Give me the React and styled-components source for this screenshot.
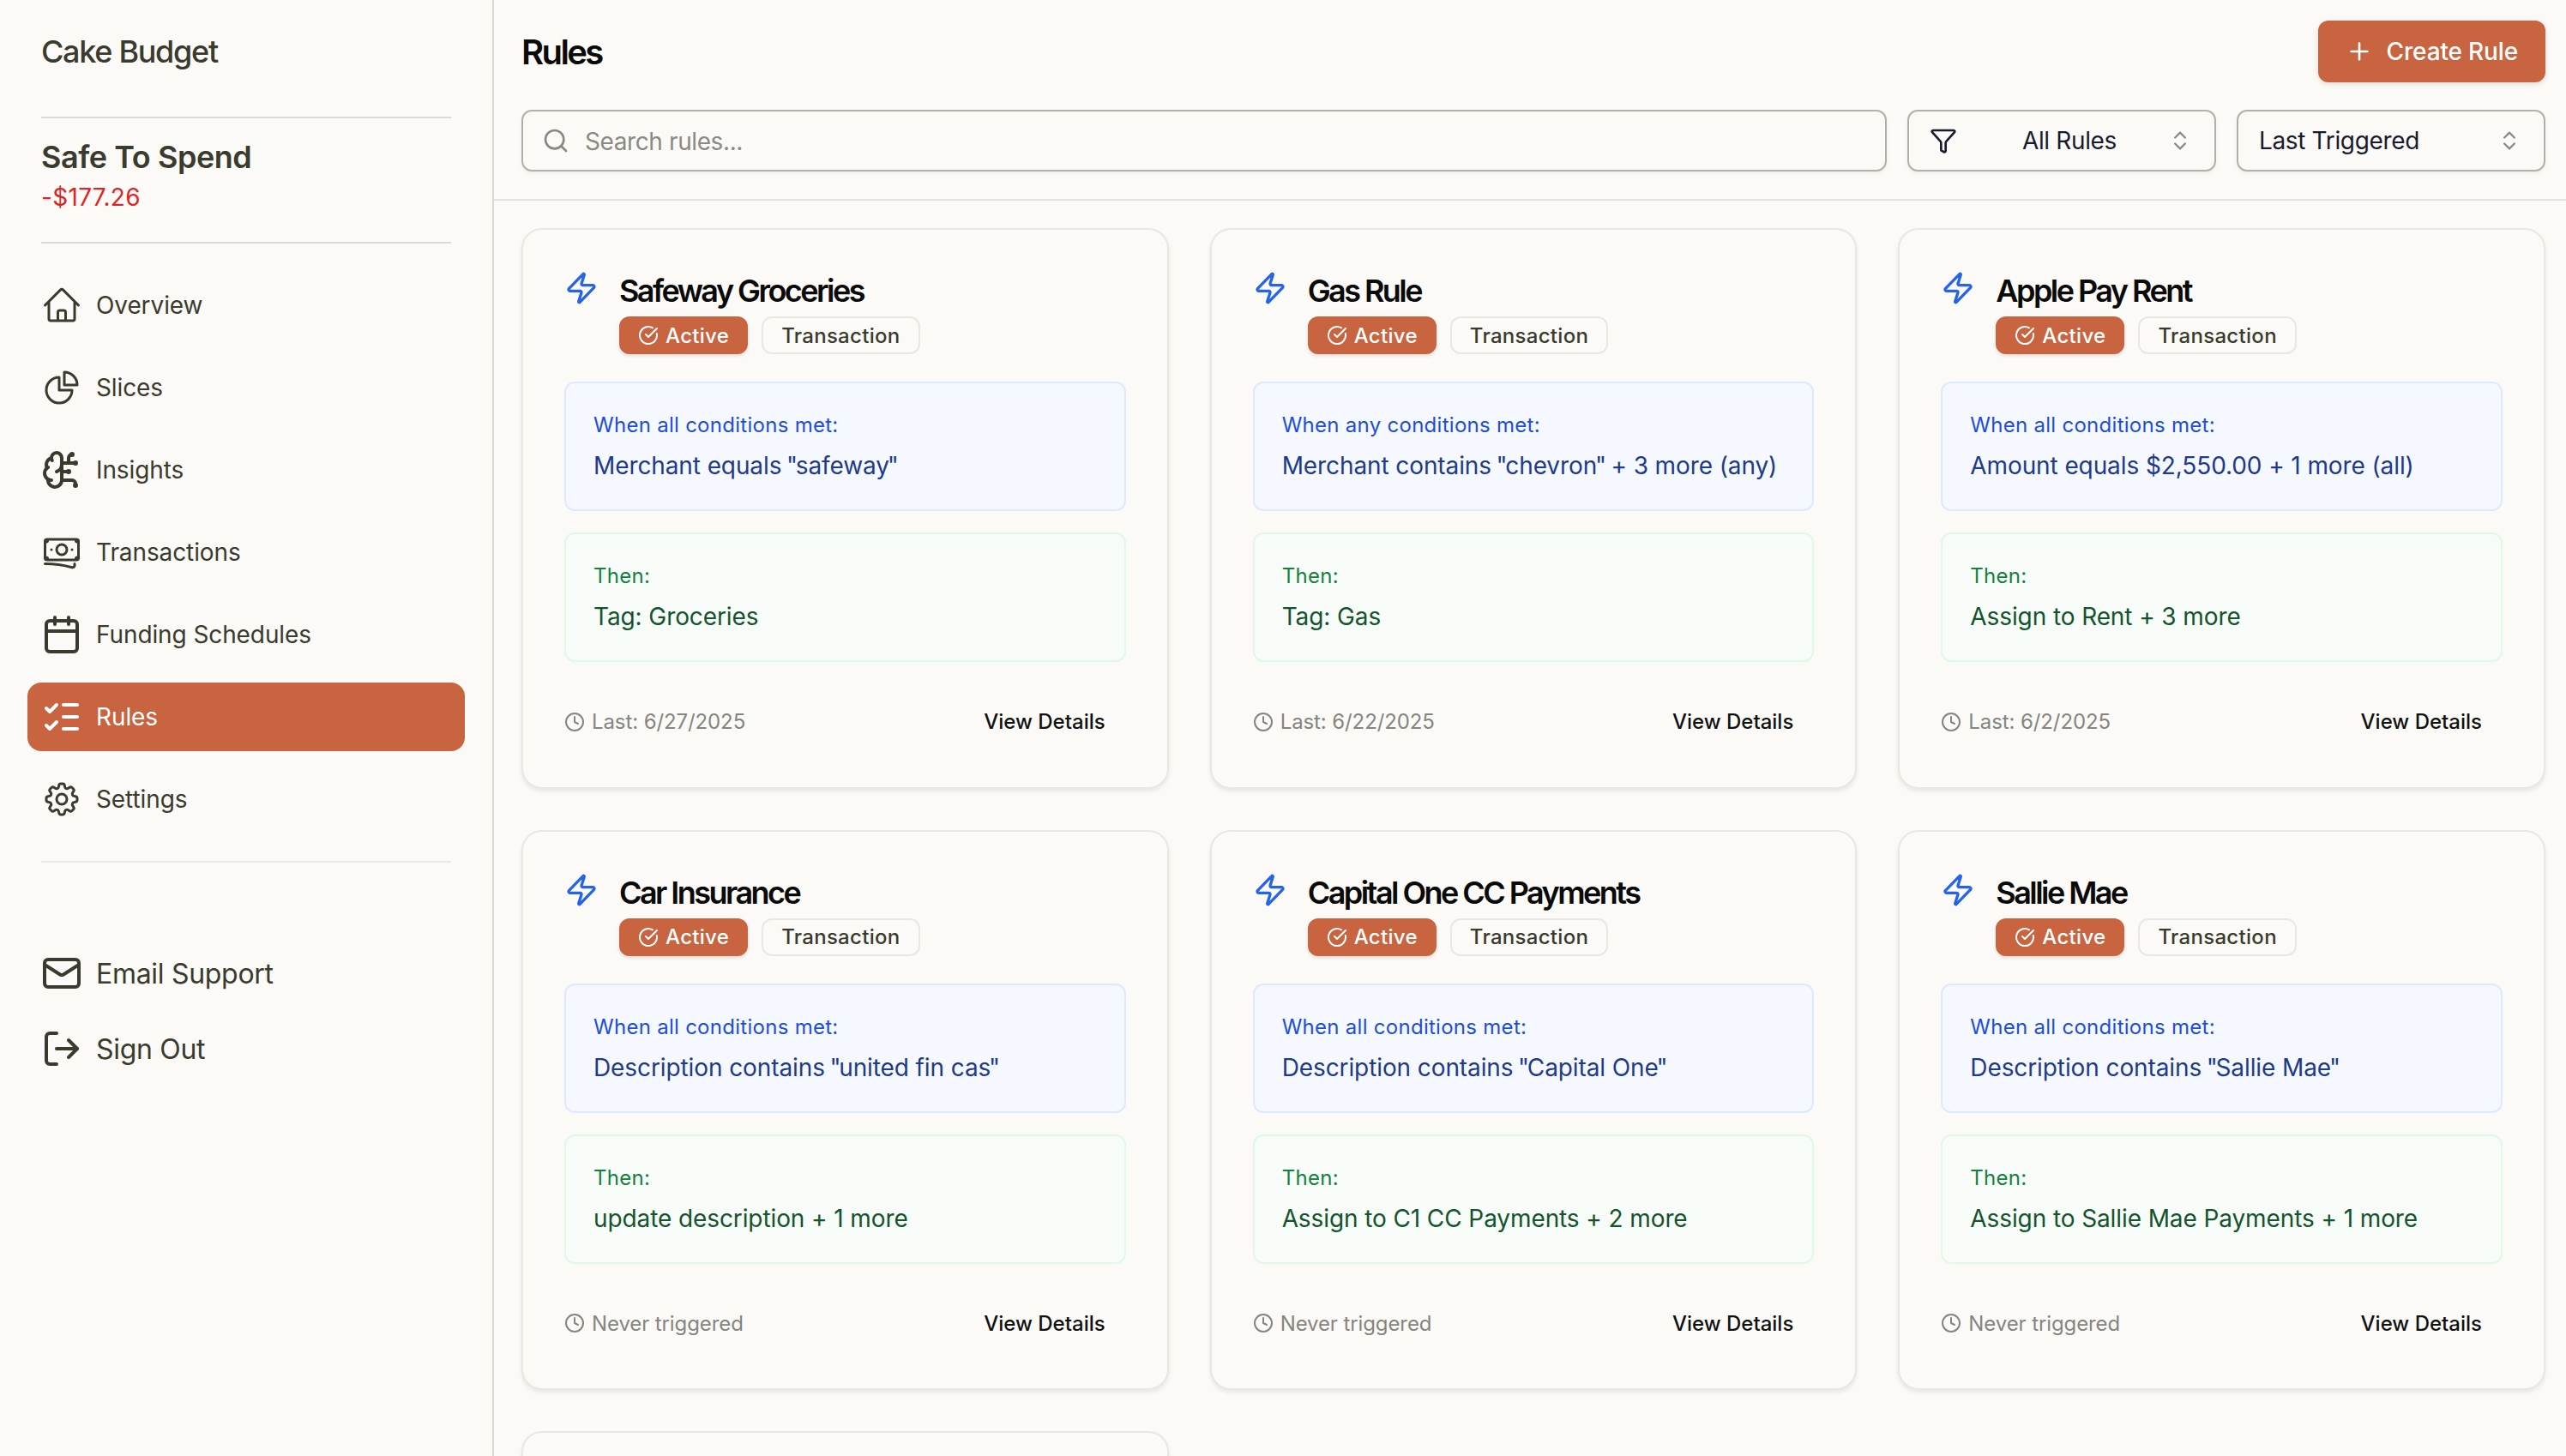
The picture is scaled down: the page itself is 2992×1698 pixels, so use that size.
import React from 'react'
import styled, { createGlobalStyle } from 'styled-components'
import {
  BrainCircuit, Calendar, ChevronsUpDown, CircleCheckBig, Clock, Filter, ListChecks,
  LogOut, Mail, Plus, Search, Zap,
} from 'lucide-react'
import { HiOutlineBanknotes, HiOutlineChartPie, HiOutlineCog8Tooth, HiOutlineHome } from 'react-icons/hi2'

const GlobalStyle = createGlobalStyle`
  * { box-sizing: border-box; }
  html, body { margin: 0; height: 100%; overflow: hidden; }
  body {
    background: #fbfaf6;
    font-family: Inter, "Noto Sans", sans-serif;
    color: #3a3a2e;
  }
`

const Page = styled.div`
  display: flex;
  height: 100vh;
  overflow: hidden;
`

const Sidebar = styled.aside`
  flex: 0 0 576px;
  padding: 0 32px;
  border-right: 2px solid #d9d8d3;
`

const Brand = styled.div`
  height: 120px;
  margin-bottom: 16px;
  padding: 0 16px;
  display: flex;
  align-items: center;
  font-size: 36px;
  font-weight: 500;
  letter-spacing: -1.3px;
`

const Divider = styled.hr`
  margin: 0 16px;
  border: none;
  height: 2px;
  background: ${(p) => (p.$light ? '#e9e8e4' : '#dbdad6')};
`

const Balance = styled.div`
  height: 144px;
  padding: 24px 16px 0;
`

const BalanceTitle = styled.div`
  font-size: 36px;
  line-height: 42px;
  font-weight: 600;
  letter-spacing: -0.45px;
`

const BalanceAmount = styled.div`
  margin-top: 8px;
  font-size: 28px;
  line-height: 36px;
  letter-spacing: 0.3px;
  color: #dc2626;
`

const Nav = styled.nav`
  display: flex;
  flex-direction: column;
  gap: 16px;
  padding: 32px 0;
`

const NavItem = styled.a`
  display: flex;
  align-items: center;
  gap: 16px;
  height: 80px;
  padding: 0 16px;
  border-radius: 16px;
  font-size: 28px;
  letter-spacing: -0.1px;
  color: ${(p) => (p.$active ? '#ffffff' : '#3a3a2e')};
  background: ${(p) => (p.$active ? '#c8643f' : 'transparent')};
  svg { flex: 0 0 48px; width: 48px; height: 48px; }
`

const FooterNav = styled.div`
  display: flex;
  flex-direction: column;
  gap: 16px;
  padding-top: 93px;
`

const FooterItem = styled(NavItem)`
  height: 72px;
  font-size: 32px;
  letter-spacing: -0.3px;
`

const Main = styled.main`
  flex: 1;
  min-width: 0;
`

const Header = styled.header`
  display: flex;
  flex-direction: column;
  gap: 32px;
  padding: 24px 24px 32px 32px;
  border-bottom: 2px solid #e3e2dc;
`

const TitleRow = styled.div`
  display: flex;
  align-items: center;
  justify-content: space-between;
`

const PageTitle = styled.h1`
  margin: 0;
  font-size: 40px;
  font-weight: 600;
  letter-spacing: -2.6px;
  color: #0a0a0a;
`

const CreateButton = styled.button`
  display: flex;
  align-items: center;
  gap: 16px;
  height: 72px;
  padding: 0 32px;
  border: none;
  border-radius: 12px;
  background: #c8643f;
  color: #fff;
  font: 500 28px Inter, sans-serif;
  letter-spacing: -0.15px;
  box-shadow: 0 2px 6px rgba(0, 0, 0, 0.12);
`

const Filters = styled.div`
  display: flex;
  gap: 24px;
`

const SearchField = styled.div`
  flex: 1;
  display: flex;
  align-items: center;
  gap: 18px;
  height: 72px;
  padding: 0 22px;
  border: 2px solid #b2b1a8;
  border-radius: 12px;
  color: #8a8a84;
  font-size: 28px;
  box-shadow: 0 2px 4px rgba(0, 0, 0, 0.05);
`

const SearchText = styled.span`
  padding-top: 2px;
  letter-spacing: -0.4px;
`

const Select = styled.div`
  flex: 0 0 360px;
  display: flex;
  align-items: center;
  height: 72px;
  padding: 0 24px;
  border: 2px solid #b2b1a8;
  border-radius: 12px;
  font-size: 28px;
  letter-spacing: -0.35px;
  color: #1a1a2e;
  box-shadow: 0 2px 4px rgba(0, 0, 0, 0.05);
  > svg:first-child { margin-right: ${(p) => (p.$icon ? '16px' : '0')}; }
`

const SelectText = styled.span`
  flex: 1;
  text-align: ${(p) => (p.$center ? 'center' : 'left')};
`

const UpDown = styled(ChevronsUpDown)`
  margin-right: 2px;
  opacity: 0.5;
`

const Grid = styled.div`
  display: grid;
  grid-template-columns: repeat(3, 1fr);
  gap: 48px;
  padding: 32px 24px 0 32px;
`

const Card = styled.article`
  min-height: 653.5px;
  display: flex;
  flex-direction: column;
  padding: 48px;
  border: 2px solid #e8e7e2;
  border-radius: 24px;
  background: #fbfaf7;
  box-shadow: 0 3px 5px rgba(0, 0, 0, 0.08);
`

const CardHead = styled.div`
  display: flex;
  gap: 24px;
`

const ZapIcon = styled(Zap)`
  flex: 0 0 40px;
  color: #2563eb;
`

const CardTitle = styled.h3`
  margin: 0;
  font-size: 36px;
  line-height: 46px;
  font-weight: 600;
  letter-spacing: -2.55px;
  color: #0a0a0a;
`

const Badges = styled.div`
  display: flex;
  gap: 16px;
  margin-top: 7px;
`

const Badge = styled.span`
  display: inline-flex;
  align-items: center;
  gap: 8px;
  height: 44px;
  padding: 0 ${(p) => (p.$filled ? '20px' : '21px')};
  border-radius: 12px;
  font-size: 24px;
  font-weight: 500;
  letter-spacing: 0.3px;
  color: ${(p) => (p.$filled ? '#fff' : '#3a3a2e')};
  background: ${(p) => (p.$filled ? '#c8643f' : 'transparent')};
  border: 2px solid ${(p) => (p.$filled ? '#c8643f' : '#e8e7e2')};
  box-shadow: ${(p) => (p.$filled ? '0 2px 4px rgba(0,0,0,0.12)' : 'none')};
`

const Box = styled.div`
  height: 151px;
  padding: 33px 32px 0;
  border-radius: 12px;
  border: 2px solid ${(p) => (p.$tone === 'blue' ? '#dfe9fd' : '#dff8e7')};
  background: ${(p) => (p.$tone === 'blue' ? '#f5f8fe' : '#f7fcf8')};
`

const WhenBox = styled(Box)`
  margin-top: 32px;
`

const ThenBox = styled(Box)`
  margin-top: 25px;
`

const BoxLabel = styled.div`
  font-size: 24px;
  line-height: 32px;
  letter-spacing: 0.28px;
  color: ${(p) => (p.$tone === 'blue' ? '#1d4ed8' : '#15803d')};
`

const BoxValue = styled.div`
  margin-top: 11px;
  font-size: 28px;
  line-height: 40px;
  letter-spacing: -0.1px;
  color: ${(p) => (p.$tone === 'blue' ? '#1e3a8a' : '#14532d')};
`

// the installed Inter draws a straight quote wider than the reference does
const Quote = styled.span`
  margin: 0 -2.2px;
`

const CardFooter = styled.div`
  display: flex;
  align-items: center;
  justify-content: space-between;
  height: 56px;
  margin-top: 41.5px;
`

const LastRun = styled.span`
  display: flex;
  align-items: center;
  gap: 8px;
  font-size: 24px;
  letter-spacing: -0.1px;
  color: #85857f;
`

const DetailsLink = styled.a`
  padding: 0 24px;
  font-size: 24px;
  font-weight: 500;
  color: #111;
`

const navItems = [
  { label: 'Overview', icon: <HiOutlineHome /> },
  { label: 'Slices', icon: <HiOutlineChartPie /> },
  { label: 'Insights', icon: <BrainCircuit /> },
  { label: 'Transactions', icon: <HiOutlineBanknotes /> },
  { label: 'Funding Schedules', icon: <Calendar /> },
  { label: 'Rules', icon: <ListChecks />, active: true },
  { label: 'Settings', icon: <HiOutlineCog8Tooth /> },
]

const rules = [
  { name: 'Safeway Groceries', when: 'When all conditions met:', cond: 'Merchant equals "safeway"', then: 'Tag: Groceries', last: 'Last: 6/27/2025' },
  { name: 'Gas Rule', when: 'When any conditions met:', cond: 'Merchant contains "chevron" + 3 more (any)', then: 'Tag: Gas', last: 'Last: 6/22/2025' },
  { name: 'Apple Pay Rent', when: 'When all conditions met:', cond: 'Amount equals $2,550.00 + 1 more (all)', then: 'Assign to Rent + 3 more', last: 'Last: 6/2/2025' },
  { name: 'Car Insurance', when: 'When all conditions met:', cond: 'Description contains "united fin cas"', then: 'update description + 1 more', last: 'Never triggered' },
  { name: 'Capital One CC Payments', when: 'When all conditions met:', cond: 'Description contains "Capital One"', then: 'Assign to C1 CC Payments + 2 more', last: 'Never triggered' },
  { name: 'Sallie Mae', when: 'When all conditions met:', cond: 'Description contains "Sallie Mae"', then: 'Assign to Sallie Mae Payments + 1 more', last: 'Never triggered' },
]

function withQuotes(text) {
  return text.split(/(")/).map((part, i) => (part === '"' ? <Quote key={i}>"</Quote> : part))
}

function RuleCard({ rule }) {
  return (
    <Card>
      <CardHead>
        <ZapIcon size={40} />
        <div>
          <CardTitle>{rule.name}</CardTitle>
          <Badges>
            <Badge $filled><CircleCheckBig size={24} />Active</Badge>
            <Badge>Transaction</Badge>
          </Badges>
        </div>
      </CardHead>
      <WhenBox $tone="blue">
        <BoxLabel $tone="blue">{rule.when}</BoxLabel>
        <BoxValue $tone="blue">{withQuotes(rule.cond)}</BoxValue>
      </WhenBox>
      <ThenBox $tone="green">
        <BoxLabel $tone="green">Then:</BoxLabel>
        <BoxValue $tone="green">{rule.then}</BoxValue>
      </ThenBox>
      <CardFooter>
        <LastRun><Clock size={24} />{rule.last}</LastRun>
        <DetailsLink>View Details</DetailsLink>
      </CardFooter>
    </Card>
  )
}

export default function App() {
  return (
    <Page>
      <GlobalStyle />
      <Sidebar>
        <Brand>Cake Budget</Brand>
        <Divider />
        <Balance>
          <BalanceTitle>Safe To Spend</BalanceTitle>
          <BalanceAmount>-$177.26</BalanceAmount>
        </Balance>
        <Divider />
        <Nav>
          {navItems.map((item) => (
            <NavItem key={item.label} $active={item.active}>{item.icon}{item.label}</NavItem>
          ))}
        </Nav>
        <Divider $light />
        <FooterNav>
          <FooterItem><Mail />Email Support</FooterItem>
          <FooterItem><LogOut />Sign Out</FooterItem>
        </FooterNav>
      </Sidebar>
      <Main>
        <Header>
          <TitleRow>
            <PageTitle>Rules</PageTitle>
            <CreateButton><Plus size={32} />Create Rule</CreateButton>
          </TitleRow>
          <Filters>
            <SearchField><Search size={32} /><SearchText>Search rules...</SearchText></SearchField>
            <Select $icon>
              <Filter size={32} />
              <SelectText $center>All Rules</SelectText>
              <UpDown size={28} />
            </Select>
            <Select>
              <SelectText>Last Triggered</SelectText>
              <UpDown size={28} />
            </Select>
          </Filters>
        </Header>
        <Grid>
          {rules.map((rule) => <RuleCard key={rule.name} rule={rule} />)}
          <Card />
        </Grid>
      </Main>
    </Page>
  )
}
